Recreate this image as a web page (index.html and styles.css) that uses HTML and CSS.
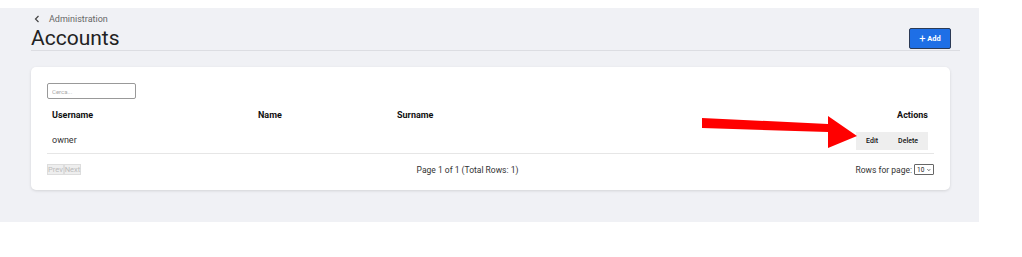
FILE: index.html
```html
<!DOCTYPE html>
<html lang="it">
<head>
    <meta charset="UTF-8">
    <meta name="viewport" content="width=device-width, initial-scale=1.0">
    <title>Accounts</title>
    <link rel="stylesheet" href="styles.css">
</head>
<body>
    <div class="page">
        <div class="header">
            <div class="header-left">
                <div class="breadcrumb">
                    <svg width="8" height="8" viewBox="0 0 8 8"><path d="M5.5 1 L2.5 4 L5.5 7" fill="none" stroke="#444" stroke-width="1.2"/></svg>
                    <span>Administration</span>
                </div>
                <h1>Accounts</h1>
            </div>
            <button class="btn-add"><span class="plus">+</span> Add</button>
        </div>

        <div class="card">
            <input type="text" class="search" placeholder="Cerca...">
            <table class="grid">
                <thead>
                    <tr>
                        <th class="col-user">Username</th>
                        <th class="col-name">Name</th>
                        <th class="col-surname">Surname</th>
                        <th class="col-actions">Actions</th>
                    </tr>
                </thead>
                <tbody>
                    <tr>
                        <td>owner</td>
                        <td></td>
                        <td></td>
                        <td class="col-actions">
                            <div class="actions">
                                <button>Edit</button>
                                <button>Delete</button>
                            </div>
                        </td>
                    </tr>
                </tbody>
            </table>
            <div class="pager">
                <div class="pager-btns">
                    <button disabled>Prev</button><button disabled>Next</button>
                </div>
                <div class="pager-info">Page 1 of 1 (Total Rows: 1)</div>
                <div class="pager-size">
                    <span>Rows for page:</span>
                    <div class="size-select">
                        <span>10</span>
                        <svg width="6" height="4" viewBox="0 0 6 4"><path d="M0.8 0.8 L3 3 L5.2 0.8" fill="none" stroke="#222" stroke-width="1.2"/></svg>
                    </div>
                </div>
            </div>
        </div>
    </div>

    <svg class="arrow" width="170" height="40" viewBox="0 0 170 40">
        <polygon points="2,2 128,8 128,0 157,20 128,32 128,16 2,12" fill="#ff0000"/>
    </svg>
</body>
</html>
```

FILE: styles.css
```css
body {
    margin: 0;
    font-family: Roboto, "Liberation Sans", Arial, sans-serif;
    background: #fff;
    color: #222;
}
.page {
    width: 979px;
    height: 214px;
    margin-top: 8px;
    background: #f0f1f5;
    padding: 0 29px 0 31px;
    box-sizing: border-box;
}
.header {
    display: flex;
    justify-content: space-between;
    align-items: flex-start;
    border-bottom: 1px solid #dcdde2;
    margin-right: -10px;
    padding-right: 10px;
    height: 42px;
}
.breadcrumb {
    display: flex;
    align-items: center;
    gap: 8px;
    padding: 6px 0 0 2px;
    font-size: 9px;
    color: #666;
}
h1 {
    margin: 0;
    padding-top: 2px;
    font-size: 21px;
    font-weight: 400;
    color: #222;
    line-height: 24px;
}
.btn-add {
    margin-top: 20px;
    margin-right: -1px;
    width: 42px;
    height: 21px;
    background: #1e6fe6;
    color: #fff;
    border: 1px solid #2b3a55;
    border-radius: 2px;
    font-family: inherit;
    font-size: 7.5px;
    font-weight: 700;
    padding: 0;
}
.btn-add .plus {
    font-size: 11px;
    font-weight: 400;
    vertical-align: -1px;
}
.card {
    margin-top: 16px;
    background: #fff;
    border-radius: 5px;
    box-shadow: 0 1px 3px rgba(0, 0, 0, 0.12);
    padding: 16px 16px 0 16px;
    height: 123px;
    box-sizing: border-box;
}
.search {
    display: block;
    width: 89px;
    height: 16px;
    box-sizing: border-box;
    border: 1px solid #999;
    border-radius: 2px;
    font-size: 6px;
    padding: 0 4px;
    font-family: inherit;
}
.search::placeholder {
    color: #aaa;
}
.grid {
    width: 100%;
    border-collapse: collapse;
    font-size: 9px;
    margin-top: 6px;
}
.grid th {
    text-align: left;
    font-weight: 700;
    height: 19px;
    padding: 0;
    color: #111;
}
.grid td {
    height: 26px;
    padding: 3px 0 0 0;
    border-bottom: 1px solid #e6e6e6;
    color: #333;
}
.grid .col-user { width: 206px; padding-left: 5px; }
.grid td:first-child { padding-left: 5px; }
.grid .col-name { width: 139px; }
.grid .col-actions { text-align: right; padding-right: 6px; }
.actions {
    display: inline-flex;
    background: #eeeeee;
    height: 18px;
    margin-top: 1px;
}
.actions button {
    background: transparent;
    border: 0;
    font-family: inherit;
    font-size: 7px;
    font-weight: 500;
    color: #111;
    padding: 0 10px;
}
.pager {
    display: flex;
    justify-content: space-between;
    align-items: center;
    margin-top: 10px;
    font-size: 8.5px;
    color: #333;
}
.pager-btns {
    display: flex;
    width: 200px;
}
.pager-btns button {
    font-size: 7.5px;
    font-family: inherit;
    color: #bbb;
    background: #eee;
    border: 1px solid #ddd;
    padding: 0;
    height: 11px;
    line-height: 9px;
}
.pager-info {
    margin-left: -46px;
    color: #333;
}
.pager-size {
    width: 200px;
    display: flex;
    justify-content: flex-end;
    align-items: center;
    gap: 2px;
}
.size-select {
    display: flex;
    align-items: center;
    gap: 3px;
    width: 20px;
    height: 11px;
    box-sizing: border-box;
    border: 1px solid #666;
    border-radius: 1px;
    padding: 0 2px;
    font-size: 6.5px;
    color: #222;
}
.arrow {
    position: absolute;
    left: 700px;
    top: 116px;
}
```
